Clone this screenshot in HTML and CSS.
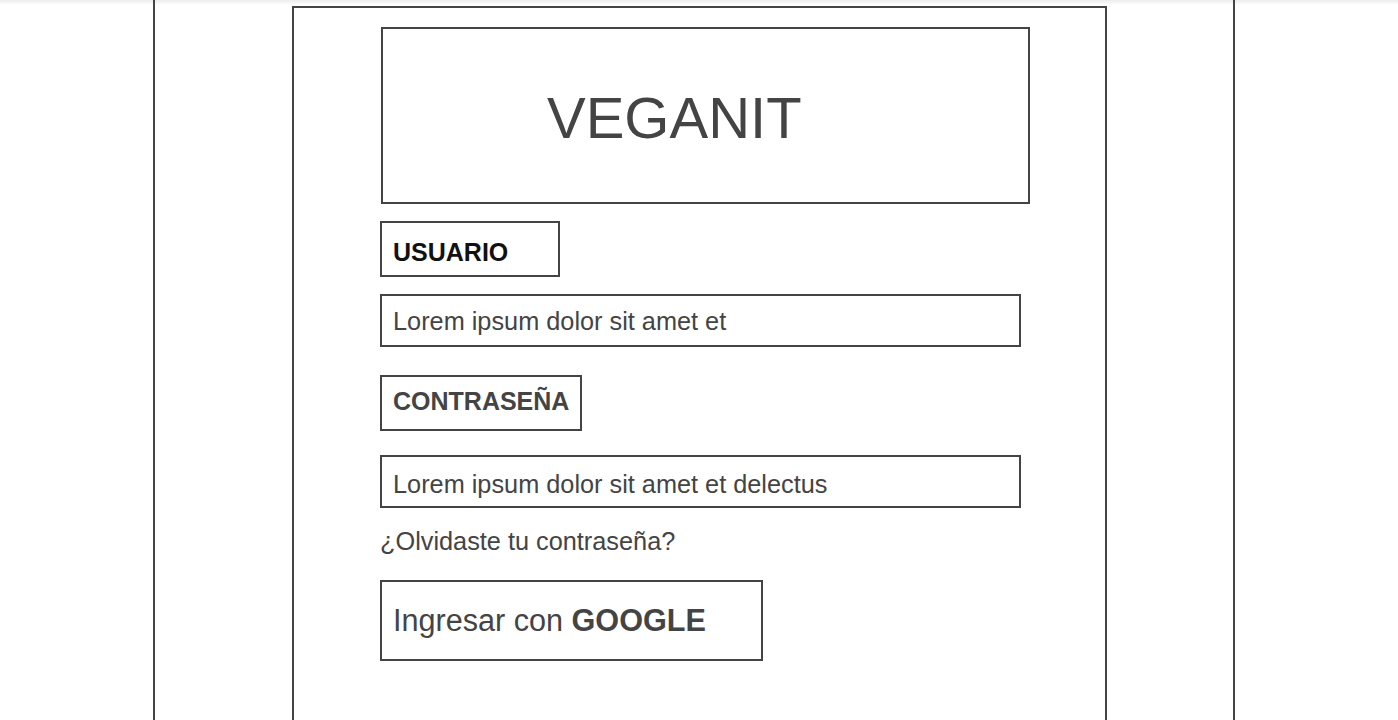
FILE: index.html
```html
<!DOCTYPE html>
<html lang="es">
<head>
<meta charset="utf-8">
<title>VEGANIT</title>
<link rel="stylesheet" href="styles.css">
</head>
<body>
<div class="frame">
  <div class="panel">
    <div class="content">
      <div class="logo-box"><span class="logo">VEGANIT</span></div>
      <div class="label label-user">USUARIO</div>
      <div class="field field-user">Lorem ipsum dolor sit amet et</div>
      <div class="label label-pass">CONTRASEÑA</div>
      <div class="field field-pass">Lorem ipsum dolor sit amet et delectus</div>
      <div class="forgot">¿Olvidaste tu contraseña?</div>
      <div class="google">Ingresar con <b>GOOGLE</b></div>
    </div>
  </div>
</div>
</body>
</html>
```
FILE: styles.css
```css
* { box-sizing: border-box; }
html, body { margin: 0; padding: 0; }
body {
  background: linear-gradient(#ececec 0px, #ffffff 5px) no-repeat, #ffffff;
  font-family: "Liberation Sans", Arial, sans-serif;
  color: #444444;
  overflow: hidden;
  height: 720px;
}
.frame {
  margin-left: 153px;
  width: 1082px;
  height: 720px;
  border-left: 2px solid #444;
  border-right: 2px solid #444;
  padding-top: 6px;
}
.panel {
  margin-left: 137px;
  width: 815px;
  height: 714px;
  border: 2px solid #444;
  border-bottom: none;
}
.content {
  padding-left: 86px;
  padding-top: 19px;
  display: flex;
  flex-direction: column;
  align-items: flex-start;
}
.logo-box {
  margin-left: 1px;
  width: 649px;
  height: 177px;
  border: 2px solid #444;
  padding-left: 164px;
  padding-top: 55px;
}
.logo {
  font-size: 58px;
  line-height: normal;
  color: #444;
  display: block;
}
.label {
  border: 2px solid #444;
  height: 56px;
  padding-left: 11px;
  font-size: 25px;
  font-weight: bold;
  line-height: normal;
}
.label-user {
  margin-top: 17px;
  width: 180px;
  padding-top: 15px;
  color: #111;
}
.label-pass {
  margin-top: 28px;
  width: 202px;
  padding-top: 10px;
  color: #444;
}
.field {
  border: 2px solid #444;
  width: 641px;
  height: 53px;
  padding-left: 11px;
  font-size: 25.3px;
  line-height: normal;
  color: #444;
}
.field-user {
  margin-top: 17px;
  padding-top: 11px;
}
.field-pass {
  margin-top: 24px;
  padding-top: 13px;
}
.forgot {
  margin-top: 19px;
  font-size: 25.3px;
  line-height: normal;
  color: #444;
}
.google {
  margin-top: 24px;
  width: 383px;
  height: 81px;
  border: 2px solid #444;
  padding-left: 11px;
  padding-top: 21px;
  font-size: 30.6px;
  line-height: normal;
  color: #444;
}
.google b { font-weight: bold; }
```
